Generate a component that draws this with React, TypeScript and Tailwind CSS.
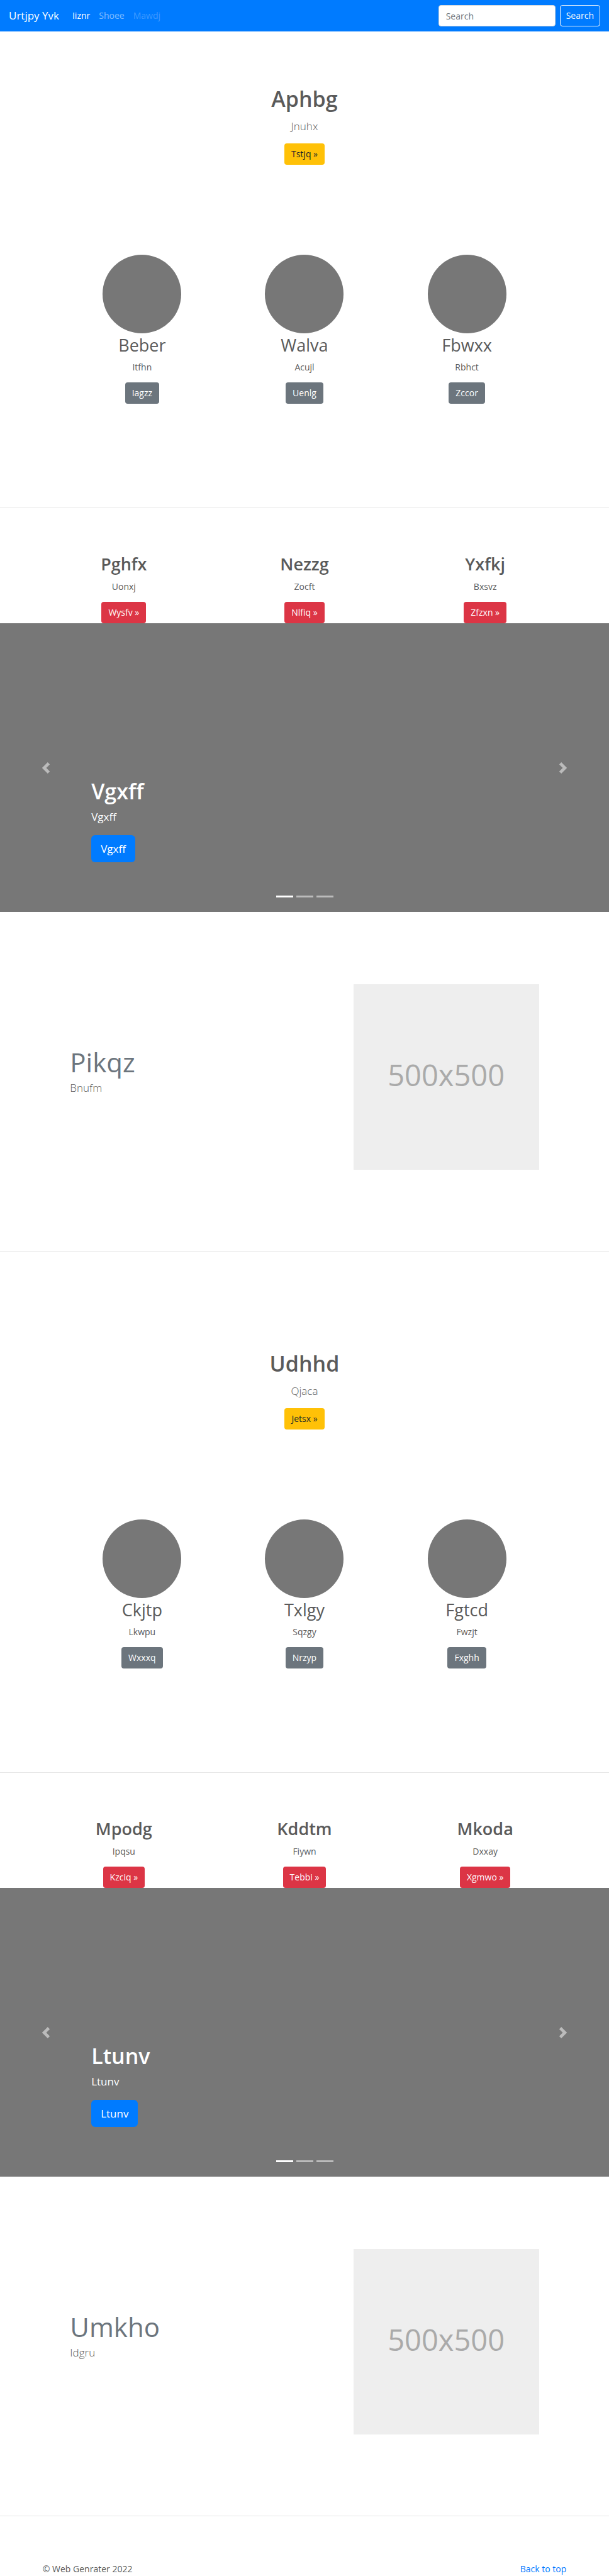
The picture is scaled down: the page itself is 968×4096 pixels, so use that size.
import type { ReactNode } from "react";

type Item = { title: string; text: string; action: string };

type Block = {
  hero: Item;
  circles: Item[];
  columns: Item[];
  slide: string;
  feature: { title: string; text: string };
};

const blocks: Block[] = [
  {
    hero: { title: "Aphbg", text: "Jnuhx", action: "Tstjq »" },
    circles: [
      { title: "Beber", text: "Itfhn", action: "Iagzz" },
      { title: "Walva", text: "Acujl", action: "Uenlg" },
      { title: "Fbwxx", text: "Rbhct", action: "Zccor" },
    ],
    columns: [
      { title: "Pghfx", text: "Uonxj", action: "Wysfv »" },
      { title: "Nezzg", text: "Zocft", action: "Nlfiq »" },
      { title: "Yxfkj", text: "Bxsvz", action: "Zfzxn »" },
    ],
    slide: "Vgxff",
    feature: { title: "Pikqz", text: "Bnufm" },
  },
  {
    hero: { title: "Udhhd", text: "Qjaca", action: "Jetsx »" },
    circles: [
      { title: "Ckjtp", text: "Lkwpu", action: "Wxxxq" },
      { title: "Txlgy", text: "Sqzgy", action: "Nrzyp" },
      { title: "Fgtcd", text: "Fwzjt", action: "Fxghh" },
    ],
    columns: [
      { title: "Mpodg", text: "Ipqsu", action: "Kzciq »" },
      { title: "Kddtm", text: "Fiywn", action: "Tebbi »" },
      { title: "Mkoda", text: "Dxxay", action: "Xgmwo »" },
    ],
    slide: "Ltunv",
    feature: { title: "Umkho", text: "Idgru" },
  },
];

function ButtonLink({ tone, children }: { tone: string; children: ReactNode }) {
  return (
    <a href="#" className={`inline-flex h-[34px] items-center rounded px-[11px] text-sm ${tone}`}>
      {children}
    </a>
  );
}

function Navbar() {
  return (
    <nav className="flex h-[50px] items-center bg-[#007bff] px-[14px] text-sm text-white">
      <a href="#" className="text-[17px]">Urtjpy Yvk</a>
      <ul className="ml-[21px] flex gap-[14px]">
        <li><a href="#">Iiznr</a></li>
        <li><a href="#" className="text-white/50">Shoee</a></li>
        <li><a href="#" className="text-white/25">Mawdj</a></li>
      </ul>
      <form className="ml-auto flex gap-[7px]" onSubmit={(e) => e.preventDefault()}>
        <input
          type="search"
          aria-label="Search"
          placeholder="Search"
          className="h-[34px] w-[186px] rounded border border-[#ced4da] bg-white px-[11px] text-sm text-[#495057] placeholder:text-[#6c757d]"
        />
        <button type="submit" className="h-[34px] rounded border border-[#f8f9fa] px-[9px] text-[#f8f9fa]">
          Search
        </button>
      </form>
    </nav>
  );
}

function Chevron({ flip }: { flip?: boolean }) {
  return (
    <svg viewBox="0 0 8 8" className="size-[18px]" fill="#fff" aria-hidden="true">
      {flip ? (
        <path d="M2.75 0l-1.5 1.5 2.5 2.5-2.5 2.5 1.5 1.5 4-4-4-4z" />
      ) : (
        <path d="M5.25 0l-4 4 4 4 1.5-1.5-2.5-2.5 2.5-2.5-1.5-1.5z" />
      )}
    </svg>
  );
}

function Carousel({ text }: { text: string }) {
  return (
    <section className="relative flex h-[459px] items-end bg-[#777] px-[15%] pb-[79px] text-white">
      <div>
        <h2 className="text-[34px] leading-[43px] font-semibold">{text}</h2>
        <p className="mt-[5px] text-[17px] leading-[27px]">{text}</p>
        <a
          href="#"
          className="mt-[16px] inline-flex h-[43px] items-center rounded-md bg-[#007bff] px-[15px] text-[17px]"
        >
          {text}
        </a>
      </div>
      <button
        type="button"
        aria-label="Previous"
        className="absolute inset-y-0 left-0 flex w-[15%] items-center justify-center opacity-50"
      >
        <Chevron />
      </button>
      <button
        type="button"
        aria-label="Next"
        className="absolute inset-y-0 right-0 flex w-[15%] items-center justify-center opacity-50"
      >
        <Chevron flip />
      </button>
      <div className="absolute inset-x-0 bottom-[23px] flex justify-center gap-[5px]">
        <span className="h-[3px] w-[27px] bg-white" />
        <span className="h-[3px] w-[27px] bg-white/50" />
        <span className="h-[3px] w-[27px] bg-white/50" />
      </div>
    </section>
  );
}

function PageBlock({ block }: { block: Block }) {
  return (
    <>
      <header className="flex flex-col items-center pt-[86px] text-center">
        <h1 className="text-[34px] leading-[43px] font-semibold">{block.hero.title}</h1>
        <p className="mt-[8px] text-[17px] leading-[27px] font-light">{block.hero.text}</p>
        <div className="mt-[14px] flex">
          <ButtonLink tone="bg-[#ffc107] text-[#212529]">{block.hero.action}</ButtonLink>
        </div>
      </header>

      <section className="mx-auto mt-[143px] grid w-4/5 grid-cols-3 text-center">
        {block.circles.map((item) => (
          <div key={item.title} className="flex flex-col items-center">
            <div className="size-[125px] rounded-full bg-[#777]" />
            <h2 className="text-[27px] leading-[38px]">{item.title}</h2>
            <p className="mt-[5px] text-sm leading-[21px]">{item.text}</p>
            <div className="mt-[14px] flex">
              <ButtonLink tone="bg-[#6c757d] text-white">{item.action}</ButtonLink>
            </div>
          </div>
        ))}
      </section>

      <hr className="mt-[165px] border-[#e5e5e5]" />

      <section className="mx-auto mt-[72px] grid w-[89%] grid-cols-3 text-center">
        {block.columns.map((item) => (
          <div key={item.title} className="flex flex-col items-center">
            <h2 className="text-[27px] leading-[34px] font-semibold">{item.title}</h2>
            <p className="mt-[8px] text-sm leading-[21px]">{item.text}</p>
            <div className="mt-[14px] flex">
              <ButtonLink tone="bg-[#dc3545] text-white">{item.action}</ButtonLink>
            </div>
          </div>
        ))}
      </section>

      <Carousel text={block.slide} />

      <section className="mx-auto mt-[115px] flex w-[77%] items-center justify-between">
        <div className="pb-5">
          <h2 className="text-[42px] leading-[54px] text-[#6c757d]">{block.feature.title}</h2>
          <p className="text-[17px] leading-[27px] font-light">{block.feature.text}</p>
        </div>
        <div className="flex aspect-square w-[295px] items-center justify-center bg-[#eee] pb-[6px] text-[47px] text-[#aaa]">
          500x500
        </div>
      </section>

      <hr className="mt-[129px] border-[#e5e5e5]" />
    </>
  );
}

export default function App() {
  return (
    <div className="bg-white font-['Open_Sans','Noto_Sans',sans-serif] text-[#5a5a5a]">
      <Navbar />
      <main className="flex flex-col gap-[71px]">
        {blocks.map((block) => (
          <div key={block.slide}>
            <PageBlock block={block} />
          </div>
        ))}
      </main>
      <footer className="mx-auto mt-[72px] flex w-[86%] justify-between text-sm leading-[23px]">
        <p>© Web Genrater 2022</p>
        <a href="#" className="text-[#007bff]">Back to top</a>
      </footer>
    </div>
  );
}
